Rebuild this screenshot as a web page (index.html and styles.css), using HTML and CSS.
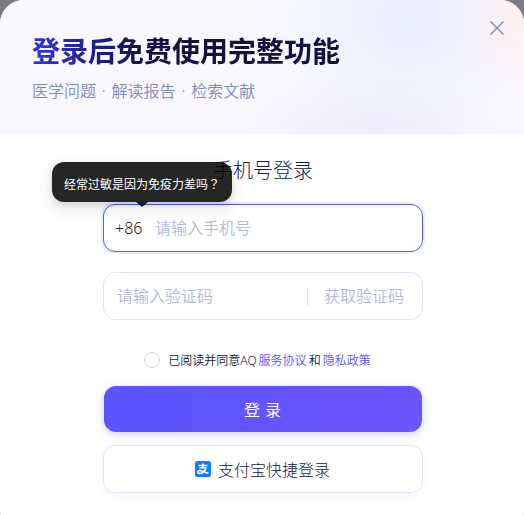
FILE: index.html
```html
<!DOCTYPE html>
<html lang="zh-CN">
<head>
    <meta charset="UTF-8">
    <meta name="viewport" content="width=device-width, initial-scale=1.0">
    <title>手机号登录</title>
    <link rel="stylesheet" href="styles.css">
</head>
<body>

    <div class="modal">
        <header class="banner">
            <h1>登录后免费使用完整功能</h1>
            <p>医学问题 · 解读报告 · 检索文献</p>
            <button class="close" aria-label="关闭">
                <svg width="16" height="16" viewBox="0 0 16 16">
                    <path d="M1.5 1.5L14.5 14.5M14.5 1.5L1.5 14.5" fill="none" stroke="#7f8bb5" stroke-width="1.4"/>
                </svg>
            </button>
        </header>

        <form class="login">
            <h2>手机号登录</h2>

            <div class="field active">
                <span class="prefix">+86</span>
                <input class="phone" type="text" placeholder="请输入手机号">
                <div class="tooltip">经常过敏是因为免疫力差吗<span class="mark" lang="zh-TW">？</span></div>
            </div>

            <div class="field">
                <input class="code" type="text" placeholder="请输入验证码">
                <span class="send-code">获取验证码</span>
            </div>

            <div class="agreement">
                <span class="radio"></span>
                <span>已阅读并同意AQ</span>
                <a>服务协议</a>
                <span>和</span>
                <a>隐私政策</a>
            </div>

            <button class="button primary" type="button">登录</button>
            <button class="button alipay" type="button">
                <svg width="16" height="16" viewBox="0 0 16 16">
                    <rect width="16" height="16" rx="2.5" fill="#1677ff"/>
                    <path d="M3.5 4.4H12.5M8 2.4V6.7M4.5 6.8H11C10.2 9.5 7.8 12.4 4.8 12.4C2 12.4 2.1 9.4 4.5 9.4C7 9.4 9.3 11.2 13.6 12.4" fill="none" stroke="#fff" stroke-width="1.5"/>
                </svg>
                <span>支付宝快捷登录</span>
            </button>
        </form>
    </div>

</body>
</html>
```

FILE: styles.css
```css
* {
    box-sizing: border-box;
}

body {
    margin: 0;
    height: 515px;
    overflow: hidden;
    background-color: #7b7c83;
    font-family: "Noto Sans", "Noto Sans CJK SC", sans-serif;
    font-weight: 350;
    color: #11213f;
}

h1, h2, p {
    margin: 0;
}

input, button {
    font: inherit;
    color: inherit;
    border: none;
    padding: 0;
    background: none;
}

.modal {
    height: 535px;
    border-radius: 24px;
    background-color: #fff;
    overflow: hidden;
}

/* banner */
.banner {
    position: relative;
    height: 134px;
    padding: 30px 32px 0;
    background:
        radial-gradient(ellipse 85px 80px at 524px 20px, #fff0f0, #fff0f000),
        radial-gradient(ellipse 150px 110px at 410px 20px, #e6efff, #eaf1ff88 55%, #f0f5ff00),
        radial-gradient(ellipse 150px 80px at 375px 140px, #eeeafd, #eeeafd00),
        linear-gradient(90deg, #faf7ff 45%, #f7f9ff 75%, #faf7ff);
}

.banner h1 {
    width: max-content;
    font-size: 28px;
    line-height: 42px;
    font-weight: 700;
    color: transparent;
    background: linear-gradient(90deg, #3033dc, #15103f 38%);
    background-clip: text;
    -webkit-background-clip: text;
}

.banner p {
    margin-top: 7px;
    font-size: 16px;
    line-height: 24px;
    word-spacing: 1.7px;
    color: #7f8bb5;
}

.close {
    position: absolute;
    top: 20px;
    right: 19px;
    width: 16px;
    height: 16px;
    cursor: pointer;
}

.close svg {
    display: block;
}

/* form */
.login {
    width: 320px;
    margin: 0 auto;
    padding-top: 22px;
    transform: translateX(1px);
}

.login h2 {
    font-size: 20px;
    line-height: 30px;
    font-weight: 300;
    text-align: center;
}

.field {
    position: relative;
    display: flex;
    align-items: center;
    height: 48px;
    margin-top: 20px;
    border: 1px solid #e2e2f5;
    border-radius: 12px;
    font-size: 16px;
}

.field.active {
    margin-top: 18px;
    border-color: #5b58ee;
    box-shadow: 0 0 0 2px #e6f2ff;
}

.field input {
    min-width: 0;
    outline: none;
}

.field input::placeholder {
    color: #b2bad5;
    opacity: 1;
}

.prefix {
    width: 40px;
    margin-left: 11px;
    color: #222;
}

.phone, .code {
    flex: 1;
}

.code {
    margin-left: 13px;
}

.send-code {
    padding: 0 18px 0 16px;
    border-left: 1px solid #e2e2f0;
    line-height: 19px;
    color: #b2bad5;
}

.tooltip {
    position: absolute;
    left: -52px;
    top: -43px;
    width: 180px;
    height: 40px;
    border-radius: 12px;
    background-color: rgba(0, 0, 0, 0.85);
    box-shadow: 0 6px 16px rgba(0, 0, 0, 0.12), 0 3px 6px rgba(0, 0, 0, 0.08);
    color: #fff;
    font-size: 12px;
    line-height: 43px;
    font-weight: 400;
    text-align: center;
    white-space: nowrap;
}

.tooltip .mark {
    font-family: "Noto Sans CJK TC", sans-serif;
}

.tooltip::after {
    content: "";
    position: absolute;
    left: 84px;
    top: 40px;
    border: 6px solid transparent;
    border-top: 5px solid rgba(0, 0, 0, 0.85);
    border-bottom: none;
}

.agreement {
    display: flex;
    align-items: center;
    justify-content: center;
    height: 16px;
    margin: 32px 11px 0 0;
    font-size: 12px;
    gap: 2px;
}

.agreement a {
    color: #5a50ff;
}

.radio {
    width: 16px;
    height: 16px;
    margin-right: 6px;
    border: 1px solid #d5d5d9;
    border-radius: 50%;
}

.button {
    display: flex;
    align-items: center;
    justify-content: center;
    width: 320px;
    height: 48px;
    border-radius: 12px;
    font-size: 16px;
    cursor: pointer;
}

.primary {
    width: 318px;
    height: 46px;
    margin: 18px 1px 0;
    padding-bottom: 1px;
    background: linear-gradient(90deg, #5a55ff, #6c55ff);
    box-shadow: 0 2px 8px rgba(90, 80, 255, 0.28);
    color: #fff;
    font-weight: 400;
    letter-spacing: 5px;
    text-indent: 4px;
}

.alipay {
    gap: 7px;
    margin-top: 13px;
    padding: 0 1px 1px 0;
    border: 1px solid #e2e2f5;
    box-shadow: 0 4px 12px rgba(0, 0, 0, 0.03);
    font-weight: 300;
}
```
